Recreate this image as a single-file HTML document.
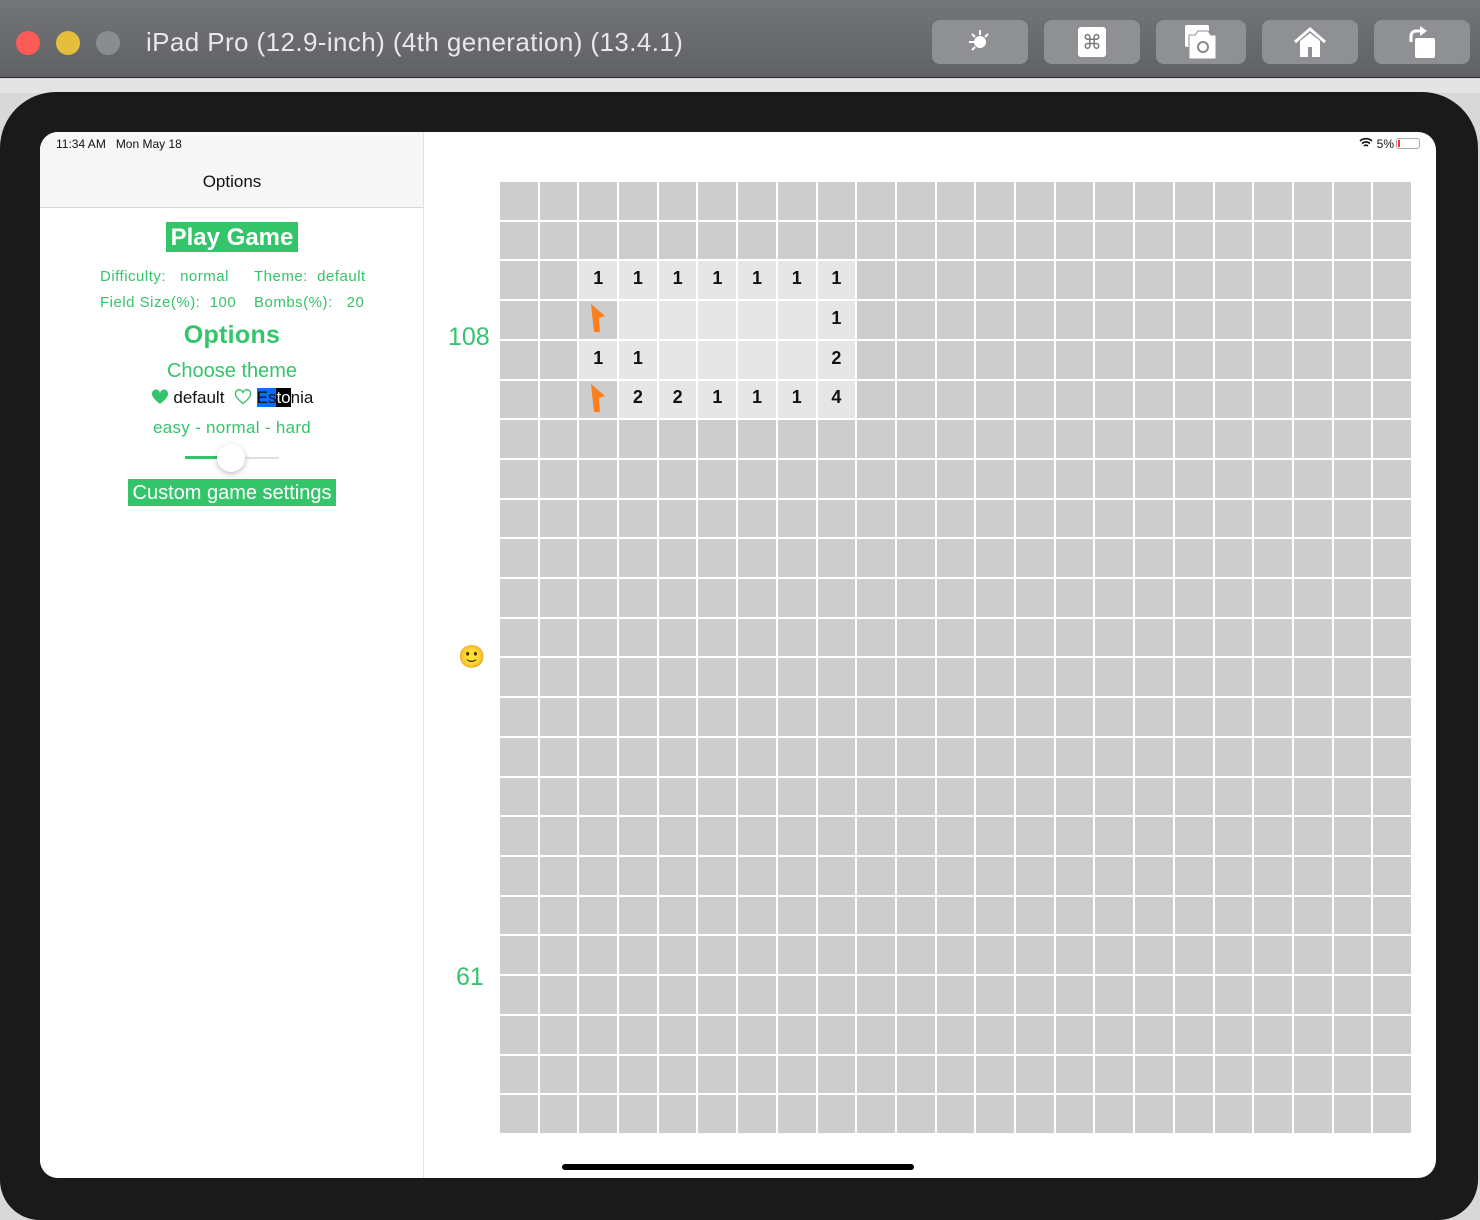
<!DOCTYPE html>
<html><head><meta charset="utf-8"><style>
*{box-sizing:border-box;margin:0;padding:0}
body{width:1480px;height:1220px;overflow:hidden;background:#d8d8d8;font-family:"Liberation Sans",sans-serif;position:relative}
.top{position:absolute;left:0;top:0;width:1480px;height:78px;background:linear-gradient(#737578,#5f6164);border-bottom:1px solid #2a2a2a}
.dot{position:absolute;top:31px;width:24px;height:24px;border-radius:50%}
.title{position:absolute;left:146px;top:27px;color:#e8e8e8;font-size:26px;letter-spacing:0.4px}
.btn{position:absolute;top:20px;height:44px;border-radius:8px;background:#8e9093}
.btn svg{position:absolute;left:50%;top:50%;transform:translate(-50%,-50%)}
.strip{position:absolute;left:0;top:79px;width:1480px;height:14px;background:#e4e4e4}
.pad{position:absolute;left:0;top:92px;width:1478px;height:1128px;background:#1a1a1a;border-radius:56px 56px 40px 40px}
.screen{position:absolute;left:40px;top:132px;width:1396px;height:1046px;background:#fff;border-radius:18px;overflow:hidden}
.side{position:absolute;left:0;top:0;width:384px;height:1046px;border-right:1px solid #e2e2e2;background:#fff}
.hdr{height:76px;background:#f7f7f7;border-bottom:1px solid #d9d9d9;position:relative}
.g{color:#34c46a}
.c{position:absolute;left:0;width:384px;text-align:center}
.inf{position:absolute;font-size:15px;letter-spacing:0.5px;color:#34c46a}
.grid{position:absolute;left:460px;top:50px;width:911px;height:951px;display:grid;grid-template-columns:repeat(23,1fr);grid-template-rows:repeat(24,1fr);gap:2px}
.grid div{background:#cdcdcd;display:flex;align-items:center;justify-content:center;font-size:18px;font-weight:600;color:#111;padding-bottom:3px}
.grid div.o{background:#e6e6e6}
</style></head><body>
<div class="top">
<div class="dot" style="left:16px;background:#fc5b57"></div>
<div class="dot" style="left:56px;background:#e5bf3c"></div>
<div class="dot" style="left:96px;background:#8a8c8e"></div>
<div class="title">iPad Pro (12.9-inch) (4th generation) (13.4.1)</div>
<div class="btn" style="left:932px;width:96px"><svg width="30" height="30" viewBox="0 0 30 30" stroke="#fff" stroke-width="2" fill="#fff"><circle cx="15" cy="15" r="5"/><path d="M15 3v5M4 15h5M7 7l3 3M23 7l-3 3M7 23l3-3"/></svg></div>
<div class="btn" style="left:1044px;width:96px"><svg width="28" height="30" viewBox="0 0 28 30"><rect x="0" y="0" width="28" height="30" rx="3" fill="#fff"/><text x="14" y="22" font-size="20" text-anchor="middle" fill="#777">⌘</text></svg></div>
<div class="btn" style="left:1156px;width:90px"><svg width="34" height="34" viewBox="0 0 34 34"><rect x="1" y="0" width="24" height="22" rx="2" fill="#fff"/><path d="M5 10h6l3-4h10l3 4h5v24H5z" fill="#fff" stroke="#8e9093" stroke-width="1"/><circle cx="19" cy="22" r="5" fill="none" stroke="#888" stroke-width="2"/></svg></div>
<div class="btn" style="left:1262px;width:96px"><svg width="34" height="30" viewBox="0 0 34 30"><path d="M2 15L17 2l15 13" fill="none" stroke="#fff" stroke-width="3"/><path d="M7 14v16h20V14L17 6z" fill="#fff"/><rect x="15" y="20" width="4" height="10" fill="#8e9093"/></svg></div>
<div class="btn" style="left:1374px;width:96px"><svg width="30" height="32" viewBox="0 0 30 32"><rect x="8" y="12" width="20" height="20" rx="2" fill="#fff"/><path d="M4 16V10a5 5 0 0 1 5-5h6" fill="none" stroke="#fff" stroke-width="3"/><path d="M13 0l7 5-7 5z" fill="#fff"/></svg></div>
</div>
<div class="strip"></div>
<div class="pad"></div>
<div class="screen">
<div class="side">
<div class="hdr">
<div style="position:absolute;left:16px;top:5px;font-size:12px;color:#111">11:34 AM&nbsp;&nbsp;&nbsp;Mon May 18</div>
<div class="c" style="top:40px;font-size:17px;color:#111">Options</div>
</div>
<div class="c" style="top:92px"><span style="background:#34c46a;color:#fff;font-size:24px;font-weight:bold;padding:2px 5px 1px">Play Game</span></div>
<div class="inf" style="left:60px;top:136px">Difficulty:&nbsp;&nbsp;&nbsp;normal</div>
<div class="inf" style="left:214px;top:136px">Theme:&nbsp;&nbsp;default</div>
<div class="inf" style="left:60px;top:162px">Field Size(%):&nbsp;&nbsp;100</div>
<div class="inf" style="left:214px;top:162px">Bombs(%):&nbsp;&nbsp;&nbsp;20</div>
<div class="c g" style="top:189px;font-size:25px;font-weight:bold;letter-spacing:0.3px">Options</div>
<div class="c g" style="top:228px;font-size:20px">Choose theme</div>
<div class="c" style="top:256px;font-size:17px;color:#111"><svg width="18" height="16" viewBox="0 0 18 16" style="vertical-align:-2px"><path d="M9 15C4 11 1 8 1 5a4 4 0 0 1 8-1 4 4 0 0 1 8 1c0 3-3 6-8 10z" fill="#34c46a"/></svg> default&nbsp;&nbsp;<svg width="18" height="16" viewBox="0 0 18 16" style="vertical-align:-2px"><path d="M9 14.5C4.5 11 1.5 8 1.5 5a3.5 3.5 0 0 1 7.5-1 3.5 3.5 0 0 1 7.5 1c0 3-3 6-7.5 9.5z" fill="none" stroke="#34c46a" stroke-width="1.4"/></svg> <span style="background:#0a6ef5">Es</span><span style="background:#000;color:#fff">to</span>nia</div>
<div class="c g" style="top:286px;font-size:17px;letter-spacing:0.3px">easy - normal - hard</div>
<div style="position:absolute;left:145px;top:324px;width:48px;height:3px;background:#34c46a"></div>
<div style="position:absolute;left:193px;top:325px;width:46px;height:2px;background:#e0e0e0"></div>
<div style="position:absolute;left:177px;top:312px;width:28px;height:28px;border-radius:50%;background:#fff;box-shadow:0 2px 6px rgba(0,0,0,.25)"></div>
<div class="c" style="top:350px"><span style="background:#34c46a;color:#fff;font-size:20px;padding:3px 5px 2px">Custom game settings</span></div>
</div>
<div style="position:absolute;right:42px;top:5px;font-size:12px;color:#111">
<svg width="14" height="11" viewBox="0 0 14 11"><path d="M1 4a9 9 0 0 1 12 0M3 6.5a6 6 0 0 1 8 0M5 9a3 3 0 0 1 4 0" fill="none" stroke="#111" stroke-width="1.6"/></svg> 5%</div>
<div style="position:absolute;right:16px;top:6px;width:24px;height:11px;border:1px solid #aaa;border-radius:3px"><div style="width:2px;height:7px;margin:1px;background:#f33"></div></div>
<div class="g" style="position:absolute;left:408px;top:191px;font-size:25px">108</div>
<div style="position:absolute;left:418px;top:512px;font-size:22px">🙂</div>
<div class="g" style="position:absolute;left:416px;top:831px;font-size:25px">61</div>
<div class="grid" id="g"></div>
<div style="position:absolute;left:522px;top:1032px;width:352px;height:6px;border-radius:3px;background:#000"></div>
</div>
<script>
var g=document.getElementById('g'),
R={2:['1','1','1','1','1','1','1'],3:['F','','','','','','1'],4:['1','1','','','','','2'],5:['F','2','2','1','1','1','4']};
var flag='<svg width="20" height="32" viewBox="0 0 20 32"><path d="M3 2l14 12-6 2 1 14-6 0z" fill="#fb7f1f"/></svg>';
for(var r=0;r<24;r++)for(var c=0;c<23;c++){var d=document.createElement('div');
if(R[r]&&c>=2&&c<=8){var v=R[r][c-2];if(v=='F'){d.innerHTML=flag}else{d.className='o';d.textContent=v}}
g.appendChild(d)}
</script>
</body></html>
